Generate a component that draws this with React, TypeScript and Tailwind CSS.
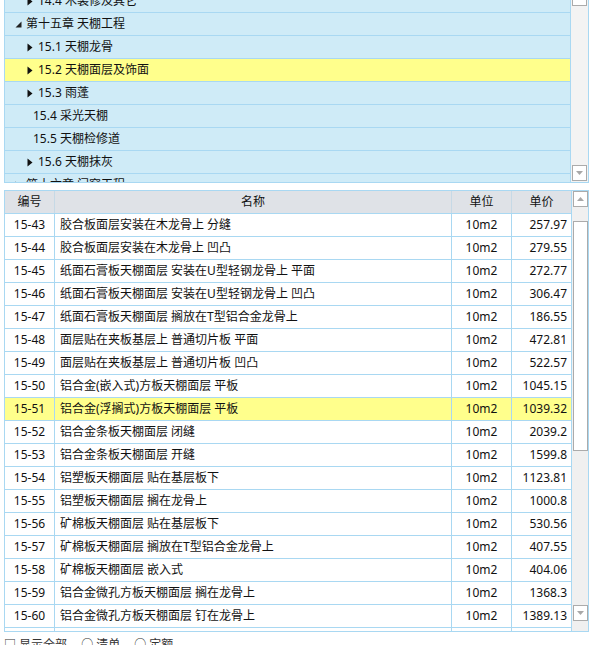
import React from 'react';

const font = { fontFamily: '"Noto Sans", "Noto Sans CJK SC", sans-serif' };

type TreeNode = { label: string; level: number; icon: 'closed' | 'open' | 'none'; active?: boolean };

const tree: TreeNode[] = [
  { label: '14.4 木装修及其它', level: 1, icon: 'closed' },
  { label: '第十五章 天棚工程', level: 0, icon: 'open' },
  { label: '15.1 天棚龙骨', level: 1, icon: 'closed' },
  { label: '15.2 天棚面层及饰面', level: 1, icon: 'closed', active: true },
  { label: '15.3 雨蓬', level: 1, icon: 'closed' },
  { label: '15.4 采光天棚', level: 1, icon: 'none' },
  { label: '15.5 天棚检修道', level: 1, icon: 'none' },
  { label: '15.6 天棚抹灰', level: 1, icon: 'closed' },
  { label: '第十六章 门窗工程', level: 0, icon: 'closed' },
];

const rows: [string, string, string, string][] = [
  ['15-43', '胶合板面层安装在木龙骨上 分缝', '10m2', '257.97'],
  ['15-44', '胶合板面层安装在木龙骨上 凹凸', '10m2', '279.55'],
  ['15-45', '纸面石膏板天棚面层 安装在U型轻钢龙骨上 平面', '10m2', '272.77'],
  ['15-46', '纸面石膏板天棚面层 安装在U型轻钢龙骨上 凹凸', '10m2', '306.47'],
  ['15-47', '纸面石膏板天棚面层 搁放在T型铝合金龙骨上', '10m2', '186.55'],
  ['15-48', '面层贴在夹板基层上 普通切片板 平面', '10m2', '472.81'],
  ['15-49', '面层贴在夹板基层上 普通切片板 凹凸', '10m2', '522.57'],
  ['15-50', '铝合金(嵌入式)方板天棚面层 平板', '10m2', '1045.15'],
  ['15-51', '铝合金(浮搁式)方板天棚面层 平板', '10m2', '1039.32'],
  ['15-52', '铝合金条板天棚面层 闭缝', '10m2', '2039.2'],
  ['15-53', '铝合金条板天棚面层 开缝', '10m2', '1599.8'],
  ['15-54', '铝塑板天棚面层 贴在基层板下', '10m2', '1123.81'],
  ['15-55', '铝塑板天棚面层 搁在龙骨上', '10m2', '1000.8'],
  ['15-56', '矿棉板天棚面层 贴在基层板下', '10m2', '530.56'],
  ['15-57', '矿棉板天棚面层 搁放在T型铝合金龙骨上', '10m2', '407.55'],
  ['15-58', '矿棉板天棚面层 嵌入式', '10m2', '404.06'],
  ['15-59', '铝合金微孔方板天棚面层 搁在龙骨上', '10m2', '1368.3'],
  ['15-60', '铝合金微孔方板天棚面层 钉在龙骨上', '10m2', '1389.13'],
  ['15-61', '铝合金微孔方板天棚面层 贴在基层板下', '10m2', '1402.6'],
];

function Arrow({ kind }: { kind: 'closed' | 'open' }) {
  if (kind === 'open') {
    return (
      <svg width="7" height="7" viewBox="0 0 7 7" className="shrink-0">
        <path d="M6.5 0.5 L6.5 6.5 L0.5 6.5 Z" fill="#222" />
      </svg>
    );
  }
  return (
    <svg width="6" height="9" viewBox="0 0 6 9" className="shrink-0">
      <path d="M0.5 0.5 L5.5 4.5 L0.5 8.5 Z" fill="#111" />
    </svg>
  );
}

function ScrollButton({ dir }: { dir: 'up' | 'down' }) {
  return (
    <div className="w-[15px] h-[16px] bg-white border border-[#ababab] flex items-center justify-center">
      <svg width="7" height="4" viewBox="0 0 7 4">
        {dir === 'up' ? <path d="M0 4 L3.5 0 L7 4 Z" fill="#a8a8a8" /> : <path d="M0 0 L7 0 L3.5 4 Z" fill="#a8a8a8" />}
      </svg>
    </div>
  );
}

export default function App() {
  return (
    <div className="w-[590px] h-[645px] bg-white overflow-hidden pl-[4px] text-[12px] text-[#111]" style={font}>
      {/* chapter tree */}
      <div className="w-[585px] h-[183px] flex border-l border-r border-b border-[#a9d8f2] bg-[#cfebf7]">
        <div className="flex-1 overflow-hidden">
          <div className="-mt-[10px]">
            {tree.map((n, i) => (
              <div
                key={i}
                className={`h-[23px] border-b border-[#a9d8f2] flex items-center ${n.active ? 'bg-[#ffff8c]' : ''}`}
              >
                {n.icon === 'open' && (
                  <div className="pl-[10px] pr-[4px] flex items-center"><Arrow kind="open" /></div>
                )}
                {n.icon === 'closed' && (
                  <div className={`${n.level === 0 ? 'pl-[10px]' : 'pl-[22px]'} pr-[5px] flex items-center`}><Arrow kind="closed" /></div>
                )}
                {n.icon === 'none' && <div className="w-[28px]" />}
                <span className="whitespace-nowrap">{n.label}</span>
              </div>
            ))}
          </div>
        </div>
        <div className="w-[18px] bg-[#f3f3f3] border-l border-[#a9d8f2] flex flex-col items-center justify-between">
          <div className="-mt-[10px]"><ScrollButton dir="up" /></div>
          <div className="mb-[1px]"><ScrollButton dir="down" /></div>
        </div>
      </div>

      {/* quota table */}
      <div className="mt-[7px] w-[585px] h-[442px] border border-[#a9d8f2] flex overflow-hidden">
        <div className="w-[566px] overflow-hidden">
          <div className="grid grid-cols-[50px_397px_60px_59px] h-[23px] bg-[#dfe2e7] border-b border-[#a9d8f2]">
            <div className="border-r border-[#c6d9e6] flex items-center justify-center">编号</div>
            <div className="border-r border-[#c6d9e6] flex items-center justify-center">名称</div>
            <div className="border-r border-[#c6d9e6] flex items-center justify-center">单位</div>
            <div className="flex items-center justify-center">单价</div>
          </div>
          {rows.map((r) => (
            <div
              key={r[0]}
              className={`grid grid-cols-[50px_397px_60px_59px] h-[23px] border-b border-[#a9d8f2] ${r[0] === '15-51' ? 'bg-[#ffff8c]' : 'bg-white'}`}
            >
              <div className="border-r border-[#a9d8f2] flex items-center justify-center">{r[0]}</div>
              <div className="border-r border-[#a9d8f2] flex items-center pl-[5px] whitespace-nowrap overflow-hidden">{r[1]}</div>
              <div className="border-r border-[#a9d8f2] flex items-center justify-center">{r[2]}</div>
              <div className="flex items-center justify-end pr-[4px]">{r[3]}</div>
            </div>
          ))}
        </div>
        <div className="w-[17px] bg-[#f0f0f0] border-l border-[#a9d8f2] flex flex-col items-center">
          <ScrollButton dir="up" />
          <div className="mt-[14px] w-[15px] h-[230px] bg-white border border-[#ababab]" />
          <div className="mt-auto mb-[10px]"><ScrollButton dir="down" /></div>
        </div>
      </div>

      {/* options row, clipped at the window bottom */}
      <div className="mt-[3px] flex items-center gap-[14px] h-[20px] text-[#333]">
        <span>□ 显示全部</span>
        <span>○ 清单</span>
        <span>○ 定额</span>
      </div>
    </div>
  );
}
